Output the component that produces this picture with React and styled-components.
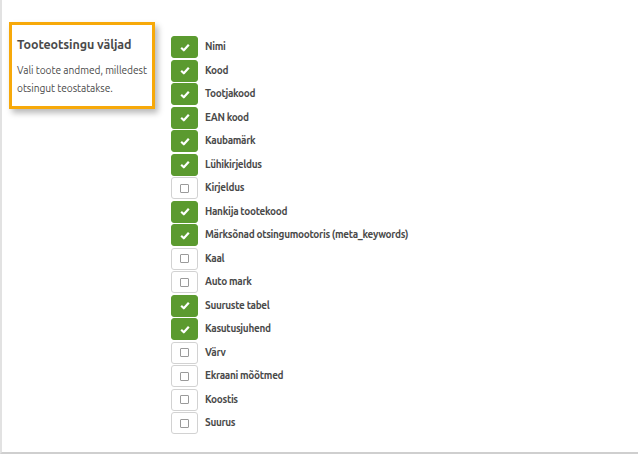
import React from "react";
import styled, { createGlobalStyle } from "styled-components";

const Global = createGlobalStyle`
  html, body { margin: 0; padding: 0; background: #fff; }
  body { font-family: "Ubuntu", "Noto Sans", "Liberation Sans", sans-serif; }
`;

const fields = [
  ["Nimi", true],
  ["Kood", true],
  ["Tootjakood", true],
  ["EAN kood", true],
  ["Kaubamärk", true],
  ["Lühikirjeldus", true],
  ["Kirjeldus", false],
  ["Hankija tootekood", true],
  ["Märksõnad otsingumootoris (meta_keywords)", true],
  ["Kaal", false],
  ["Auto mark", false],
  ["Suuruste tabel", true],
  ["Kasutusjuhend", true],
  ["Värv", false],
  ["Ekraani mõõtmed", false],
  ["Koostis", false],
  ["Suurus", false],
];

const Page = styled.div`
  display: flex;
  width: 636px;
  height: 452px;
  border-left: 2px solid #e2e2e2;
  border-bottom: 2px solid #cfcfcf;
`;

const Side = styled.div`
  width: 169px;
  flex: none;
  padding-top: 22px;
  padding-left: 7px;
  box-sizing: border-box;
`;

const Info = styled.div`
  width: 146px;
  height: 87px;
  box-sizing: border-box;
  border: 3px solid #f7a90a;
  box-shadow: 3px 4px 6px rgba(0, 0, 0, 0.28);
  padding: 12px 0 0 5px;
  color: #4a4a4a;
`;

const Title = styled.div`
  font-size: 12.5px;
  font-weight: 600;
  letter-spacing: -0.1px;
  margin-bottom: 10px;
`;

const Desc = styled.div`
  font-size: 10.2px;
  letter-spacing: -0.05px;
  line-height: 18px;
`;

const List = styled.div`
  display: flex;
  flex-direction: column;
  padding-top: 36px;
`;

const Row = styled.label`
  display: flex;
  align-items: flex-start;
  height: 23.5px;
  gap: 7px;
`;

const Box = styled.span`
  width: 27px;
  height: 22px;
  box-sizing: border-box;
  border-radius: 3px;
  display: flex;
  align-items: center;
  justify-content: center;
  background: ${(p) => (p.$on ? "#5b9a2f" : "#fff")};
  border: 1px solid ${(p) => (p.$on ? "#5b9a2f" : "#d2d2d2")};
`;

const Empty = styled.span`
  width: 7px;
  height: 7px;
  border: 1px solid #9a9a9a;
  border-radius: 1px;
`;

const Label = styled.span`
  font-size: 10px;
  font-weight: 700;
  letter-spacing: -0.3px;
  color: #4a4a4a;
  line-height: 22px;
`;

const Check = () => (
  <svg width="10" height="9" viewBox="0 0 10 9">
    <path d="M1.2 4.8 L3.8 7.3 L8.8 1.8" fill="none" stroke="#fff" strokeWidth="2.2" strokeLinejoin="round" />
  </svg>
);

export default function App() {
  return (
    <>
      <Global />
      <Page>
        <Side>
          <Info>
            <Title>Tooteotsingu väljad</Title>
            <Desc>Vali toote andmed, milledest otsingut teostatakse.</Desc>
          </Info>
        </Side>
        <List>
          {fields.map(([name, on]) => (
            <Row key={name}>
              <Box $on={on}>{on ? <Check /> : <Empty />}</Box>
              <Label>{name}</Label>
            </Row>
          ))}
        </List>
      </Page>
    </>
  );
}
